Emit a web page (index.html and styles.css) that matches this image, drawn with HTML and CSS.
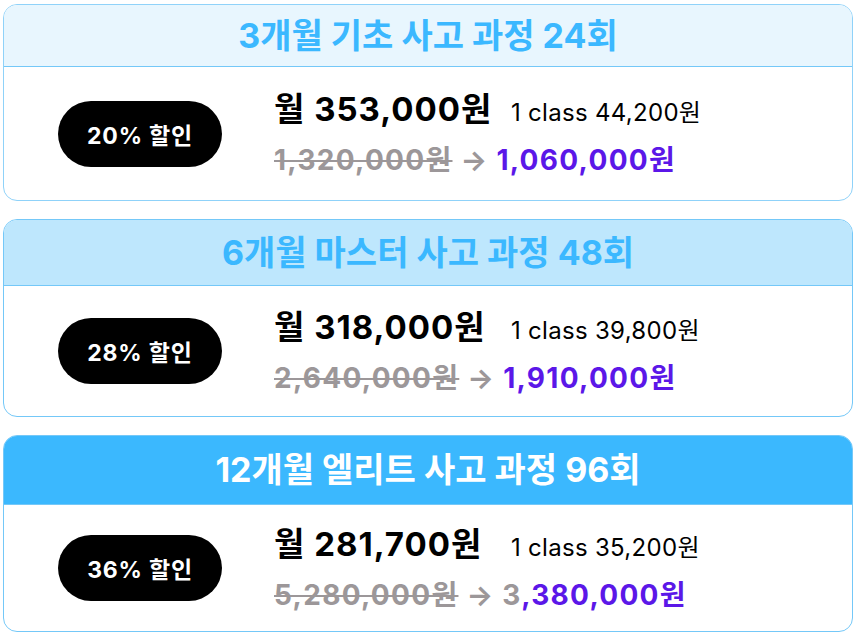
FILE: index.html
```html
<!DOCTYPE html>
<html lang="ko">
<head>
<meta charset="utf-8">
<link rel="stylesheet" href="styles.css">
</head>
<body>
<main class="plans">
  <section class="card card--basic">
    <header class="card-head"><h2 class="card-title">3개월 기초 사고 과정 24회</h2></header>
    <div class="card-body">
      <div class="badge">20% 할인</div>
      <div class="prices">
        <div class="line-main"><span class="monthly">월 353,000원</span><span class="per-class">1 class 44,200원</span></div>
        <div class="line-total"><s class="old">1,320,000원</s><span class="arrow"> → </span><span class="new">1,060,000원</span></div>
      </div>
    </div>
  </section>
  <section class="card card--master">
    <header class="card-head"><h2 class="card-title">6개월 마스터 사고 과정 48회</h2></header>
    <div class="card-body">
      <div class="badge">28% 할인</div>
      <div class="prices">
        <div class="line-main"><span class="monthly">월 318,000원</span><span class="per-class">1 class 39,800원</span></div>
        <div class="line-total"><s class="old">2,640,000원</s><span class="arrow"> → </span><span class="new">1,910,000원</span></div>
      </div>
    </div>
  </section>
  <section class="card card--elite">
    <header class="card-head"><h2 class="card-title">12개월 엘리트 사고 과정 96회</h2></header>
    <div class="card-body">
      <div class="badge">36% 할인</div>
      <div class="prices">
        <div class="line-main"><span class="monthly">월 281,700원</span><span class="per-class">1 class 35,200원</span></div>
        <div class="line-total"><s class="old">5,280,000원</s><span class="arrow"> → 3</span><span class="new">,380,000원</span></div>
      </div>
    </div>
  </section>
</main>
</body>
</html>
```
FILE: styles.css
```css
* { box-sizing: border-box; }
html, body { margin: 0; padding: 0; background: #ffffff; }
body {
  font-family: Inter, "Noto Sans CJK KR", sans-serif;
  color: #000;
}
.plans {
  display: flex;
  flex-direction: column;
  gap: 18px;
  padding: 4px 3px 0 3px;
}
.card {
  display: flex;
  flex-direction: column;
  height: 197px;
  border: 1px solid #74c8f8;
  border-radius: 14px;
  overflow: hidden;
  background: #fff;
}
.card--master { height: 198px; }
.card-head {
  display: flex;
  align-items: center;
  justify-content: center;
  flex: none;
}
.card--basic .card-head { height: 61px; background: #e8f6fe; }
.card--master .card-head { height: 65px; background: #bee7fd; }
.card--elite .card-head { height: 68px; background: #3bb8fe; }
.card--basic { border-color: #8fd2f9; }
.card-title {
  margin: 0;
  font-size: 34px;
  font-weight: 700;
  letter-spacing: 0;
  line-height: 1;
  color: #3bb8ff;
}
.card--elite .card-title { color: #ffffff; }
.card-body {
  flex: 1;
  display: flex;
  align-items: center;
  border-top: 1px solid #74c8f8;
}
.badge {
  flex: none;
  width: 164px;
  height: 66px;
  margin-left: 54px;
  border-radius: 33px;
  background: #000;
  color: #fff;
  font-size: 23px;
  font-weight: 700;
  letter-spacing: 0.8px;
  display: flex;
  align-items: center;
  justify-content: center;
}
.prices {
  margin-left: 52px;
  padding-top: 3px;
  display: flex;
  flex-direction: column;
}
.line-main {
  line-height: 51px;
  height: 51px;
  white-space: nowrap;
}
.monthly {
  display: inline-block;
  width: 237px;
  font-size: 33px;
  font-weight: 700;
  letter-spacing: 1px;
}
.per-class {
  font-size: 24px;
  font-weight: 400;
  letter-spacing: 0.3px;
}
.line-total {
  line-height: 51px;
  height: 51px;
  white-space: nowrap;
  font-size: 28px;
  font-weight: 700;
  letter-spacing: 1.3px;
}
.old {
  color: #9c9799;
  text-decoration: line-through;
  text-decoration-thickness: 2px;
}
.arrow { color: #9c9799; }
.new { color: #5b17e8; }
```
